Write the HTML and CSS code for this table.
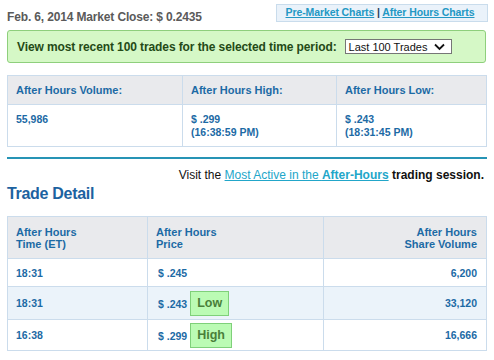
FILE: index.html
```html
<!DOCTYPE html>
<html>
<head>
<meta charset="utf-8">
<link rel="stylesheet" href="styles.css">
</head>
<body>
<div class="page">
  <div class="topbar">
    <div class="close">Feb. 6, 2014 Market Close: $ 0.2435</div>
    <div class="charts"><a href="#">Pre-Market Charts</a> | <a href="#">After Hours Charts</a></div>
  </div>
  <div class="filter">
    <span class="filter-label">View most recent 100 trades for the selected time period:</span>
    <div class="select"><span>Last 100 Trades</span>
      <svg width="11" height="8" viewBox="0 0 11 8"><path d="M1 1.5 L5.5 6 L10 1.5" fill="none" stroke="#111" stroke-width="1.8"/></svg>
    </div>
  </div>
  <table class="summary">
    <tr class="head">
      <th class="c1">After Hours Volume:</th>
      <th class="c2">After Hours High:</th>
      <th class="c3">After Hours Low:</th>
    </tr>
    <tr>
      <td>55,986</td>
      <td>$ .299<br>(16:38:59 PM)</td>
      <td>$ .243<br>(18:31:45 PM)</td>
    </tr>
  </table>
  <div class="rule"></div>
  <div class="visit">Visit the <a href="#">Most Active in the <b>After-Hours</b></a> <b>trading session.</b></div>
  <h2 class="title">Trade Detail</h2>
  <table class="trades">
    <tr class="head">
      <th class="t1">After Hours<br>Time (ET)</th>
      <th class="t2">After Hours<br>Price</th>
      <th class="t3 num">After Hours<br>Share Volume</th>
    </tr>
    <tr class="r1">
      <td>18:31</td>
      <td>$ .245</td>
      <td class="num">6,200</td>
    </tr>
    <tr class="alt r2">
      <td>18:31</td>
      <td><span class="price">$ .243</span><span class="badge">Low</span></td>
      <td class="num">33,120</td>
    </tr>
    <tr class="r3">
      <td>16:38</td>
      <td><span class="price">$ .299</span><span class="badge">High</span></td>
      <td class="num">16,666</td>
    </tr>
  </table>
</div>
</body>
</html>
```

FILE: styles.css
```css
* { box-sizing: border-box; }
body {
  margin: 0;
  background: #fff;
  font-family: "Liberation Sans", Arial, sans-serif;
}
.page {
  width: 494px;
  padding: 4px 7px 0 7px;
}
.topbar {
  display: flex;
  justify-content: space-between;
  align-items: flex-start;
  height: 18px;
}
.close {
  font-size: 12px;
  font-weight: bold;
  color: #5a5a5a;
  padding-top: 6px;
  letter-spacing: -0.15px;
}
.charts {
  width: 212px;
  height: 18px;
  margin-right: -1px;
  background: #eaf2fa;
  border: 1px solid #c9dcec;
  font-size: 10.5px;
  font-weight: bold;
  color: #1f3d5c;
  text-align: center;
  line-height: 14px;
  padding-right: 4px;
  letter-spacing: -0.1px;
}
.charts a { color: #2398c4; text-decoration: underline; }
.filter {
  margin-top: 8px;
  height: 33px;
  background: #d5f8c6;
  border: 1px solid #8ecf7c;
  border-radius: 3px;
  width: 479px;
  display: flex;
  align-items: center;
  padding-left: 9px;
}
.filter-label {
  font-size: 12px;
  font-weight: bold;
  color: #244a17;
  letter-spacing: -0.1px;
}
.select {
  margin-left: 8px;
  width: 107px;
  height: 15px;
  background: #fff;
  border: 1px solid #767676;
  display: flex;
  align-items: center;
  justify-content: space-between;
  padding: 0 6px 0 3px;
  font-size: 11px;
  color: #111;
}
table {
  border-collapse: collapse;
  width: 480px;
}
th, td {
  border: 1px solid #cbdcec;
  text-align: left;
  vertical-align: top;
  color: #1c6aa5;
  font-size: 11px;
}
th { font-weight: bold; background: #e9eaed; }
td { font-weight: bold; }
.summary { margin-top: 12px; }
.summary th { height: 29px; vertical-align: middle; padding: 0 8px; }
.summary td { height: 42px; padding: 8px 8px 0; line-height: 13px; font-size: 10.5px; }
.summary .c1 { width: 175px; }
.summary .c2 { width: 154px; }
.rule {
  margin-top: 10px;
  height: 2px;
  background: #2694b5;
  width: 480px;
}
.visit {
  margin-top: 9px;
  text-align: right;
  font-size: 12px;
  color: #111;
  padding-right: 3px;
}
.visit a { color: #22a6c9; text-decoration: underline; }
.title {
  margin: 3px 0 0 0;
  font-size: 16px;
  font-weight: bold;
  color: #1c62a0;
  height: 28px;
  letter-spacing: -0.3px;
}
.trades { margin-top: 3px; }
.trades th { height: 42px; padding: 9px 8px 0; line-height: 12px; }
.trades .t1 { width: 140px; }
.trades .t2 { width: 176px; }
.trades .num { text-align: right; padding-right: 9px; }
.trades td { vertical-align: middle; padding: 0 8px; font-size: 10.5px; }
.trades .r1 td { height: 28px; }
.trades .r2 td { height: 33px; }
.trades .r3 td { height: 31px; }
.trades td:nth-child(2) { padding-left: 10px; }
.trades tr.alt td { background: #ebf3fa; }
.price { vertical-align: middle; }
.badge {
  display: inline-block;
  vertical-align: middle;
  margin-left: 3px;
  padding: 0 6px;
  height: 25px;
  line-height: 23px;
  background: #bbfbb4;
  border: 1px solid #7fd07a;
  color: #4a7f3a;
  font-size: 12.5px;
  font-weight: bold;
}
```
